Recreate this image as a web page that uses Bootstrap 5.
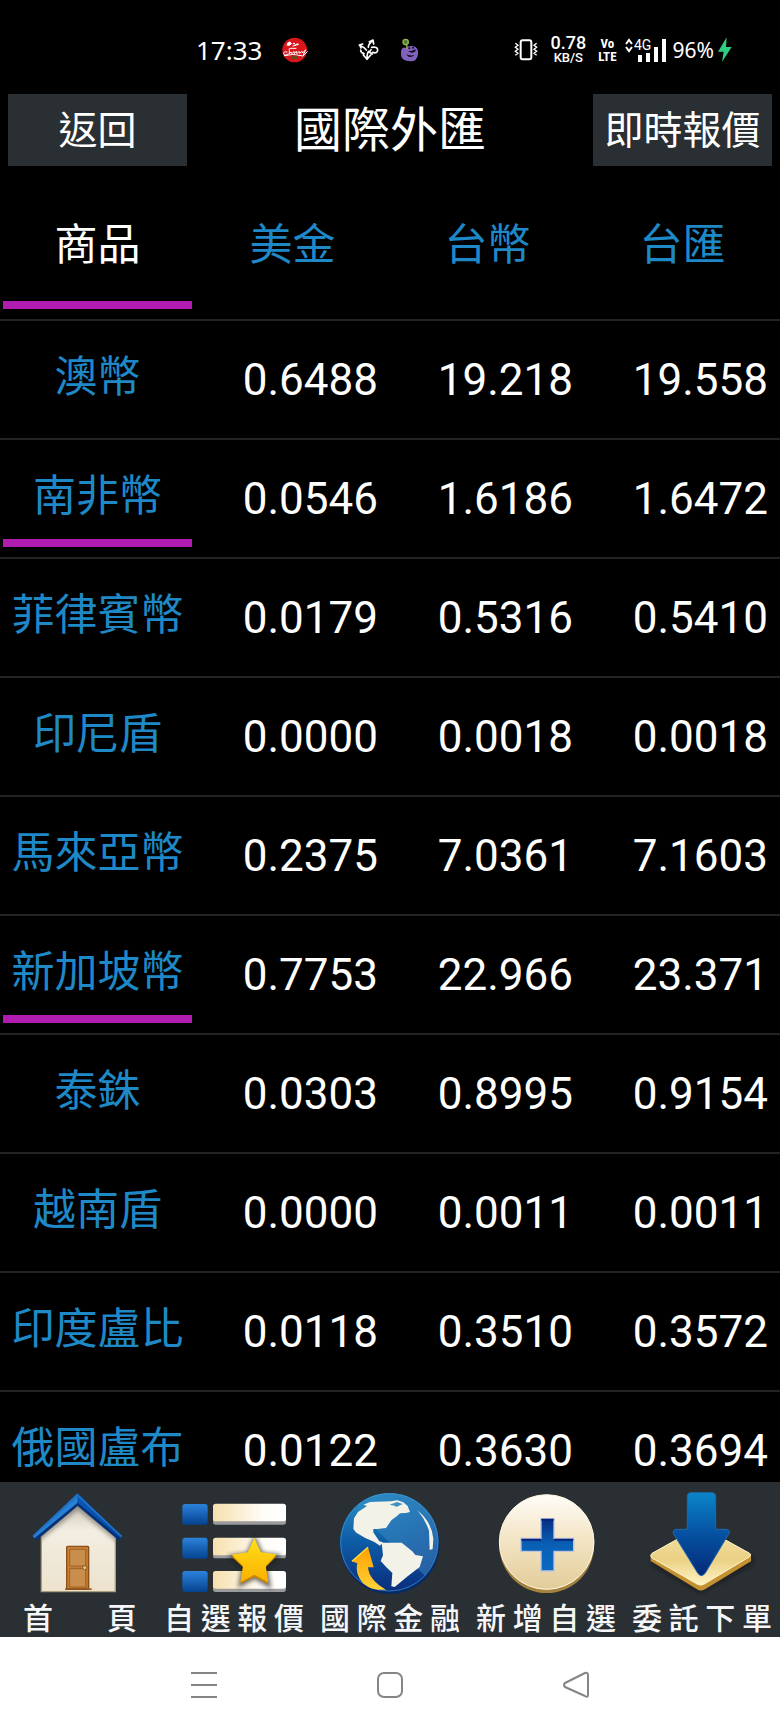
<!DOCTYPE html>
<html lang="zh-Hant">
<head>
<meta charset="utf-8">
<meta name="viewport" content="width=device-width, initial-scale=1">
<title>國際外匯</title>
<link href="https://cdn.jsdelivr.net/npm/bootstrap@5.3.0/dist/css/bootstrap.min.css" rel="stylesheet">
<style>
  body { background: #000; color: #fff; font-family: Roboto, "Noto Sans CJK TC", sans-serif; }
  .status { height: 94px; padding: 12px 48px 6px 196px; font-family: "Noto Sans", sans-serif; line-height: 1; }
  .clock { font-size: 26px; }
  .notices { gap: 20px; margin-left: 19px; }
  .notices svg:first-child { margin-right: 30px; }
  .rate, .volte { font-family: Roboto, sans-serif; font-weight: 500; }
  .rate-value { font-size: 18px; line-height: 16px; }
  .rate-unit { font-size: 13px; line-height: 14px; }
  .volte { font-family: "Roboto Condensed", "Liberation Sans Narrow", Roboto, sans-serif; font-size: 13px; line-height: 13px; font-weight: 700; }
  .battery { font-size: 21px; }
  .bar-btn { width: 179px; height: 72px; background: #2a2f33; color: #fff; font-size: 39px; line-height: 74px; border: 0; border-radius: 0; padding: 0; }
  .bar-btn:hover { background: #3a4045; color: #fff; }
  .bar-title { font-size: 48px; line-height: 72px; padding-top: 2px; }
  .top-bar { height: 72px; margin-bottom: 33px; }
  .quotes-pane { min-height: 0; scrollbar-width: none; }
  .quotes-pane::-webkit-scrollbar { display: none; }
  .quotes { table-layout: fixed; border-collapse: separate; border-spacing: 0; font-size: 44px; }
  .quotes th, .quotes td { padding: 0; border-bottom: 2px solid #232323; font-weight: 400; }
  .quotes td { text-align: right; padding-right: 12px; vertical-align: middle; line-height: 60px; }
  .quotes a { display: block; margin: 0 3px 10px; border-bottom: 8px solid transparent; color: #1f88c6; font-size: 43px; text-align: center; text-decoration: none; white-space: nowrap; }
  .quotes thead a { padding-top: 2px; padding-bottom: 12px; line-height: 88px; }
  .quotes tbody a { padding-top: 13px; line-height: 86px; }
  .quotes a.current { color: #fff; }
  .quotes a.marked { border-bottom-color: #b01cb0; }
  .tabs { background: #2a2f33; }
  .tabs a { flex: 1 1 0; color: #f4f6f8; text-decoration: none; }
  .tabs svg { display: block; width: 100%; height: 117px; }
  .tab-label { display: block; padding: 2px 8px 0; font-size: 30px; line-height: 36px; font-weight: 500; text-align: justify; text-align-last: justify; }
  .tab-label.short { padding: 2px 19px 0 23px; }
  .keys { height: 96px; background: #fff; padding: 0 111px; }
  .keys button { flex: 1 1 0; border: 0; background: none; padding: 0; }
</style>
</head>
<body class="d-flex flex-column vh-100 overflow-hidden">
<div class="status d-flex align-items-center flex-shrink-0">
  <span class="clock">17:33</span>
  <div class="notices d-flex align-items-center">
    <svg width="27" height="27" viewBox="302 48 81 81" aria-hidden="true"><circle cx="343" cy="87" r="37" fill="#d9161c"/><g fill="none" stroke="#fff" stroke-width="3" stroke-linecap="round"><path d="M320 72q0-8 9-9l4 5q-4 7-11 5z" fill="#fff"/><path d="M338 68q5-5 6 2t7-3M338 75l17-5M330 82h17M320 93q-12-2-10 5q3 8 14 1M327 83v15l5-5l3 5l6-7l1 7l6-7l2 7l6-7l2 6l7-6l2 5l9-10l-9 20l14-14M312 104q24-8 52 0"/></g><path d="M334 104h17v10h-17z" fill="#6b4a1d"/></svg>
    <svg width="22" height="22" viewBox="538 59 66 66" aria-hidden="true"><g fill="none" stroke="#fff" stroke-width="5" stroke-linecap="round" stroke-linejoin="round"><path d="M542 77l10-3M543 77l4 9M547 80q10 4 16 12M556 103q-10-3-10-11M554 107l11 13l11-13M565 118q0-16 5-22M572 67l11-5l2 12M583 64q-14 8-14 20M579 84q18-3 18 8q-1 12-15 7M577 91l-5 8l9 5"/></g></svg>
    <svg width="20" height="24" viewBox="654 55 60 72" aria-hidden="true"><path d="M659 88q5-8 14-2q4-8 18-7q19 2 17 24q-2 23-24 22q-25-1-27-19q-1-13 2-18z" fill="#8062bd"/><circle cx="671" cy="67" r="8" fill="#557c2e" stroke="#91b94c" stroke-width="4"/><path d="M671 73q6 6 3 15" stroke="#91b94c" stroke-width="4" fill="none"/><path d="M678 95q13 0 22-6q3 6-4 9q-8 4-18-3zM672 104q15 6 26 1q-9 9-18 6z" fill="#140d24"/><circle cx="682" cy="86" r="3" fill="#140d24"/><circle cx="693" cy="84" r="3" fill="#140d24"/></svg>
  </div>
  <div class="d-flex align-items-center ms-auto">
    <svg width="24" height="24" viewBox="49 54 72 72" aria-hidden="true"><rect x="69" y="61" width="32" height="57" rx="6" fill="none" stroke="#fff" stroke-width="6"/><path d="M53 70l8 6l-8 6l8 6l-8 6l8 6l-8 6M117 70l-8 6l8 6l-8 6l8 6l-8 6l8 6" fill="none" stroke="#fff" stroke-width="4"/></svg>
    <div class="rate text-center ms-2 ps-1"><span class="rate-value d-block">0.78</span><span class="rate-unit d-block">KB/S</span></div>
    <div class="volte text-center ms-2 ps-1">Vo<br>LTE</div>
    <svg class="ms-2" width="44" height="26" viewBox="0 0 44 26" aria-hidden="true"><path d="M1 7l3-4l3 4M1 10l3 4l3-4" fill="none" stroke="#fff" stroke-width="2"/><text x="9" y="13" fill="#fff" font-family="Roboto, sans-serif" font-size="14">4G</text><path d="M13 18h4v7h-4zM21 16h4v9h-4zM29 10h4v15h-4zM37 2h4v23h-4z" fill="#fff"/></svg>
    <span class="battery ms-1">96%</span>
    <svg class="ms-1" width="14" height="26" viewBox="650 51 42 78" aria-hidden="true"><path d="M676 52l-26 43h17l-5 31l29-45h-17z" fill="#2fce83"/></svg>
  </div>
</div>

<header class="top-bar d-flex align-items-center justify-content-between flex-shrink-0 px-2">
  <button type="button" class="btn bar-btn">返回</button>
  <h1 class="bar-title fw-normal m-0">國際外匯</h1>
  <button type="button" class="btn bar-btn">即時報價</button>
</header>

<main class="quotes-pane flex-grow-1 overflow-auto">
  <table class="quotes w-100">
    <thead>
      <tr><th scope="col"><a href="#" class="current marked">商品</a></th><th scope="col"><a href="#">美金</a></th><th scope="col"><a href="#">台幣</a></th><th scope="col"><a href="#">台匯</a></th></tr>
    </thead>
    <tbody>
      <tr><th scope="row"><a href="#">澳幣</a></th><td>0.6488</td><td>19.218</td><td>19.558</td></tr>
      <tr><th scope="row"><a href="#" class="marked">南非幣</a></th><td>0.0546</td><td>1.6186</td><td>1.6472</td></tr>
      <tr><th scope="row"><a href="#">菲律賓幣</a></th><td>0.0179</td><td>0.5316</td><td>0.5410</td></tr>
      <tr><th scope="row"><a href="#">印尼盾</a></th><td>0.0000</td><td>0.0018</td><td>0.0018</td></tr>
      <tr><th scope="row"><a href="#">馬來亞幣</a></th><td>0.2375</td><td>7.0361</td><td>7.1603</td></tr>
      <tr><th scope="row"><a href="#" class="marked">新加坡幣</a></th><td>0.7753</td><td>22.966</td><td>23.371</td></tr>
      <tr><th scope="row"><a href="#">泰銖</a></th><td>0.0303</td><td>0.8995</td><td>0.9154</td></tr>
      <tr><th scope="row"><a href="#">越南盾</a></th><td>0.0000</td><td>0.0011</td><td>0.0011</td></tr>
      <tr><th scope="row"><a href="#">印度盧比</a></th><td>0.0118</td><td>0.3510</td><td>0.3572</td></tr>
      <tr><th scope="row"><a href="#">俄國盧布</a></th><td>0.0122</td><td>0.3630</td><td>0.3694</td></tr>
    </tbody>
  </table>
</main>

<nav class="tabs d-flex flex-shrink-0">
  <a href="#">
    <svg viewBox="0 36 468 351" aria-hidden="true">
      <defs>
        <linearGradient id="roofL" x1="0" y1="0" x2="1" y2="1"><stop offset="0" stop-color="#1e7fd8"/><stop offset=".6" stop-color="#2c80cf"/><stop offset="1" stop-color="#03347f"/></linearGradient>
        <linearGradient id="roofR" x1="0" y1="0" x2="1" y2="1"><stop offset="0" stop-color="#0d58b5"/><stop offset="1" stop-color="#07499f"/></linearGradient>
        <linearGradient id="wall" x1="0" y1="0" x2="0" y2="1"><stop offset="0" stop-color="#cfc8ba"/><stop offset=".3" stop-color="#f3eee2"/><stop offset="1" stop-color="#ece2cd"/></linearGradient>
        <linearGradient id="door" x1="0" y1="0" x2="1" y2="1"><stop offset="0" stop-color="#c98338"/><stop offset="1" stop-color="#b9772f"/></linearGradient>
        <filter id="soft" x="-30%" y="-30%" width="160%" height="160%"><feGaussianBlur stdDeviation="6"/></filter>
        <clipPath id="wallClip"><path d="M124 198L233 104L346 198V365H124z"/></clipPath>
      </defs>
      <path d="M124 198L233 104L346 198V365H124z" fill="url(#wall)" stroke="#a99b7c" stroke-width="4"/>
      <path d="M100 216L233 108L366 216" clip-path="url(#wallClip)" fill="none" stroke="#6d675c" stroke-opacity=".6" stroke-width="20" filter="url(#soft)"/>
      <path d="M103 207L233 99L361 206" fill="none" stroke="#043179" stroke-width="14"/>
      <path d="M233 70L98 197L103 205L233 98z" fill="#2a80d3"/>
      <path d="M233 70L367 200L362 205L233 98z" fill="url(#roofR)"/>
      <path d="M100 198L233 76L365 200" fill="none" stroke="#1b73c8" stroke-width="5"/>
      <path d="M195 355h80v5h-80z" fill="#9a5f22"/><rect x="200" y="229" width="66" height="128" rx="3" fill="url(#door)" stroke="#8c4f17" stroke-width="4"/>
      <path d="M209 238h48v50h-48zM209 296h48v55h-48z" fill="#c98e4c" stroke="#a06228" stroke-width="3"/><circle cx="254" cy="293" r="6" fill="#e6c48b" stroke="#6b3c10" stroke-width="2"/>
    </svg>
    <span class="tab-label short">首頁</span>
  </a>
  <a href="#">
    <svg viewBox="468 36 468 351" aria-hidden="true">
      <defs>
        <linearGradient id="box" x1="0" y1="0" x2="0" y2="1"><stop offset="0" stop-color="#2b83dc"/><stop offset="1" stop-color="#05428f"/></linearGradient>
        <linearGradient id="strip" x1="0" y1="0" x2="1" y2="0"><stop offset="0" stop-color="#f6e0ad"/><stop offset=".7" stop-color="#fffdf8"/><stop offset="1" stop-color="#fff"/></linearGradient>
        <linearGradient id="starFill" x1="0" y1="0" x2="0" y2="1"><stop offset="0" stop-color="#ffdf18"/><stop offset="1" stop-color="#fbb000"/></linearGradient>
      </defs>
      <g fill="url(#box)"><rect x="547" y="102" width="76" height="62" rx="9"/><rect x="547" y="203" width="76" height="63" rx="9"/><rect x="547" y="303" width="76" height="63" rx="9"/></g>
      <g fill="#9b9b9d"><rect x="639" y="106" width="219" height="58" rx="8"/><rect x="639" y="207" width="219" height="58" rx="8"/><rect x="639" y="308" width="219" height="58" rx="8"/></g>
      <g fill="url(#strip)"><rect x="639" y="101" width="219" height="53" rx="8"/><rect x="639" y="203" width="219" height="53" rx="8"/><rect x="639" y="303" width="219" height="53" rx="8"/></g>
      <path d="M764 210L784 253L832 258L797 292L806 345L764 320L722 343L731 292L696 260L745 253z" fill="#1a1a1a" opacity=".65" stroke="#1a1a1a" stroke-width="12" filter="url(#soft)"/>
      <path d="M763 209L783 252L830 259L797 292L805 343L763 321L722 341L731 293L695 260L743 253z" fill="#c98600"/>
      <path d="M763 205L783 247L830 253L797 288L805 337L763 314L721 337L729 288L695 254L743 247z" fill="url(#starFill)"/>
    </svg>
    <span class="tab-label">自選報價</span>
  </a>
  <a href="#">
    <svg viewBox="6 36 468 351" aria-hidden="true">
      <defs>
        <linearGradient id="sea" x1="0" y1="0" x2="0" y2="1"><stop offset="0" stop-color="#2b93c7"/><stop offset=".5" stop-color="#0d5ba6"/><stop offset="1" stop-color="#0a2d7c"/></linearGradient>
        <linearGradient id="seaLight" x1="0" y1="0" x2="1" y2="1"><stop offset="0" stop-color="#2a8cc5"/><stop offset="1" stop-color="#2f65a8"/></linearGradient>
        <linearGradient id="swoosh" x1="0" y1="0" x2="0" y2="1"><stop offset="0" stop-color="#ff9e00"/><stop offset="1" stop-color="#ffd338"/></linearGradient>
      </defs>
      <circle cx="240" cy="223" r="149" fill="#082a62"/>
      <circle cx="238" cy="217" r="148" fill="url(#sea)"/>
      <path d="M150 98Q255 40 333 104T370 280L345 317L205 185L140 120z" fill="url(#seaLight)" opacity=".8"/>
      <circle cx="238" cy="217" r="146" fill="none" stroke="#3f91cc" stroke-width="3" opacity=".7"/>
      <g fill="#f2f2e9"><path d="M160 104L180 96L242 94L262 91L280 97L293 108L300 126L288 129L270 130L262 137L244 151L228 174L202 177L190 177L190 187L208 214L219 217L210 227L193 216L166 204L139 188L130 177L132 145L144 126L171 108z"/>
      <path d="M215 218L275 218L306 243L316 255L339 259L329 291L293 319L254 351L244 349L247 309L229 292L212 273L219 256z"/><path d="M322 121L341 139Q367 169 370 206L368 237L359 240L357 182Q345 147 322 121z"/></g>
      <path d="M239 104l22-8l17 6l-19 9l-5-4z" fill="#3e91bd"/>
      <path d="M174 232L191 292H174Q177 331 228 359Q164 364 145 317Q137 299 142 280L126 274z" fill="url(#swoosh)"/><path d="M174 232L126 274" stroke="#ffe03d" stroke-width="4"/>
    </svg>
    <span class="tab-label">國際金融</span>
  </a>
  <a href="#">
    <svg viewBox="474 36 468 351" aria-hidden="true">
      <defs>
        <linearGradient id="coin" x1="0" y1="0" x2="0" y2="1"><stop offset="0" stop-color="#fffdf7"/><stop offset=".5" stop-color="#f2e3c2"/><stop offset="1" stop-color="#e2cc98"/></linearGradient>
        <linearGradient id="plus" x1="0" y1="0" x2="0" y2="1"><stop offset="0" stop-color="#062d84"/><stop offset=".5" stop-color="#0960b4"/><stop offset="1" stop-color="#0969c0"/></linearGradient>
      </defs>
      <circle cx="710" cy="227" r="142" fill="#a5833e"/><circle cx="710" cy="216" r="142" fill="url(#coin)" stroke="#fff8e4" stroke-width="3"/>
      <path d="M693 146H732V205H791V244H732V303H693V244H633V205H693z" fill="url(#plus)" stroke="#bcc5dc" stroke-width="4"/><path d="M634 209H693M732 209H790M694 149H731" stroke="#09247a" stroke-width="6"/>
    </svg>
    <span class="tab-label">新增自選</span>
  </a>
  <a href="#">
    <svg viewBox="72 36 468 351" aria-hidden="true">
      <defs>
        <linearGradient id="plate" x1="0" y1="0" x2="0" y2="1"><stop offset="0" stop-color="#f4e3a6"/><stop offset=".55" stop-color="#ead084"/><stop offset="1" stop-color="#fff3c5"/></linearGradient>
        <linearGradient id="arrow" x1="0" y1="0" x2="0" y2="1"><stop offset="0" stop-color="#0b85c8"/><stop offset=".5" stop-color="#0551a1"/><stop offset="1" stop-color="#042a79"/></linearGradient>
      </defs>
      <path d="M302 182L456 262V285L302 368L152 282z" fill="#111" opacity=".5" filter="url(#soft)"/>
      <path d="M152 254L152 273L291 358Q302 365 315 358L453 274V255z" fill="#c59130"/>
      <path d="M156 250L292 174Q302 168 312 174L449 250Q455 255 449 260L313 342Q302 349 291 342L156 264Q148 257 156 250z" fill="url(#plate)" stroke="#fff3c9" stroke-width="3"/>
      <path d="M272 68H336Q347 68 347 79V178H379Q393 180 386 192L316 309Q304 325 293 309L221 192Q216 180 229 178H262V79Q262 68 272 68z" fill="url(#arrow)" stroke="#1e69ab" stroke-width="3"/>
    </svg>
    <span class="tab-label">委託下單</span>
  </a>
</nav>

<div class="keys d-flex align-items-center flex-shrink-0">
  <button type="button" aria-label="選單"><svg width="28" height="28" viewBox="0 0 28 28" fill="none" stroke="#858585" stroke-width="2"><path d="M1 2h26M1 14h26M1 26h26"/></svg></button>
  <button type="button" aria-label="主畫面"><svg width="28" height="28" viewBox="0 0 28 28" fill="none" stroke="#858585" stroke-width="2"><rect x="2" y="2" width="24" height="24" rx="6"/></svg></button>
  <button type="button" aria-label="上一頁"><svg width="28" height="28" viewBox="0 0 28 28" fill="none" stroke="#858585" stroke-width="2" stroke-linejoin="round"><path d="M26 4v20q0 3-3 1L3 16q-2-2 0-4L23 2q3-1 3 2z"/></svg></button>
</div>
<script src="https://cdn.jsdelivr.net/npm/bootstrap@5.3.0/dist/js/bootstrap.bundle.min.js"></script>
</body>
</html>
